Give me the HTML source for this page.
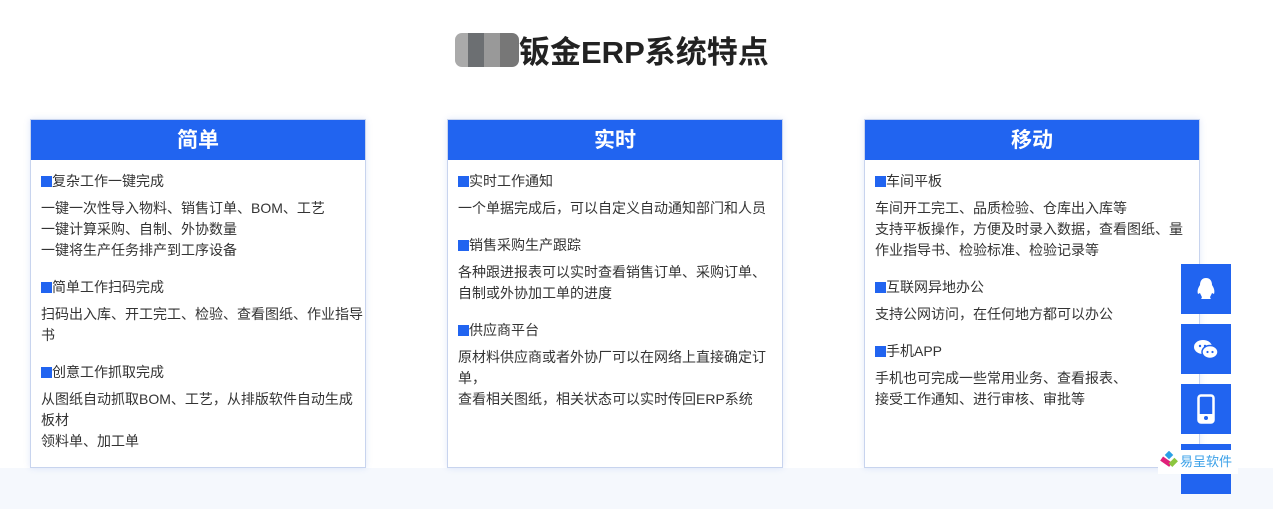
<!DOCTYPE html>
<html><head><meta charset="utf-8"><style>
body{margin:0;width:1273px;height:509px;background:#fff;position:relative;overflow:hidden;font-family:"Liberation Sans","Noto Sans CJK SC",sans-serif;color:#333}
.band{position:absolute;left:0;top:468px;width:1273px;height:41px;background:#f5f8fd}
h1{position:absolute;left:455px;top:30px;margin:0;white-space:nowrap;font-size:31px;font-weight:bold;color:#222;line-height:46px}
.blur{display:inline-block;width:64px;height:34px;vertical-align:-4px;border-radius:7px;background:linear-gradient(90deg,#aaa 0 20%,#6c6f72 20% 45%,#999 45% 70%,#777 70% 100%)}
.card{position:absolute;top:119px;width:334px;height:347px;border:1px solid #c8d4ee;background:#fff;box-shadow:0 0 6px rgba(90,130,220,.18)}
.hd{height:40px;background:#2164f0;color:#fff;font-size:21px;font-weight:bold;text-align:center;line-height:42px}
.bd{padding:11px 0 0 10px;font-size:14px;line-height:21px;color:#333}
.t{margin-bottom:6px}
.t:before{content:"";display:inline-block;width:11px;height:11px;background:#2164f0;vertical-align:-1px}
.p{margin-bottom:16px}
.sb{position:absolute;left:1181px;width:50px;height:50px;background:#2164f0;display:flex;align-items:center;justify-content:center}
.logo{position:absolute;left:1158px;top:450px;width:80px;height:24px;background:#fff;font-size:13px;color:#3aa0e8;line-height:24px}
</style></head><body>
<div class="band"></div>
<h1><span class="blur"></span>钣金ERP系统特点</h1>
<div class="card" style="left:30px"><div class="hd">简单</div><div class="bd">
<div class="t">复杂工作一键完成</div><div class="p">一键一次性导入物料、销售订单、BOM、工艺<br>一键计算采购、自制、外协数量<br>一键将生产任务排产到工序设备</div>
<div class="t">简单工作扫码完成</div><div class="p">扫码出入库、开工完工、检验、查看图纸、作业指导<br>书</div>
<div class="t">创意工作抓取完成</div><div class="p">从图纸自动抓取BOM、工艺，从排版软件自动生成<br>板材<br>领料单、加工单</div></div></div>
<div class="card" style="left:447px"><div class="hd">实时</div><div class="bd">
<div class="t">实时工作通知</div><div class="p">一个单据完成后，可以自定义自动通知部门和人员</div>
<div class="t">销售采购生产跟踪</div><div class="p">各种跟进报表可以实时查看销售订单、采购订单、<br>自制或外协加工单的进度</div>
<div class="t">供应商平台</div><div class="p">原材料供应商或者外协厂可以在网络上直接确定订<br>单，<br>查看相关图纸，相关状态可以实时传回ERP系统</div></div></div>
<div class="card" style="left:864px"><div class="hd">移动</div><div class="bd">
<div class="t">车间平板</div><div class="p">车间开工完工、品质检验、仓库出入库等<br>支持平板操作，方便及时录入数据，查看图纸、量<br>作业指导书、检验标准、检验记录等</div>
<div class="t">互联网异地办公</div><div class="p">支持公网访问，在任何地方都可以办公</div>
<div class="t">手机APP</div><div class="p">手机也可完成一些常用业务、查看报表、<br>接受工作通知、进行审核、审批等</div></div></div>
<div class="sb" style="top:264px"><svg width="22" height="24" viewBox="0 0 22 24"><path d="M11 1C7 1 5 4 5 8C3 11 2 14 3 17L5 16C6 19 8 20 6 22H16C14 20 16 19 17 16L19 17C20 14 19 11 17 8C17 4 15 1 11 1Z" fill="#fff"/></svg></div>
<div class="sb" style="top:324px"><svg width="26" height="22" viewBox="0 0 26 22"><ellipse cx="10" cy="9" rx="9" ry="7" fill="#fff"/><ellipse cx="17" cy="14" rx="8" ry="6.5" fill="#fff" stroke="#2164f0" stroke-width="1.5"/><circle cx="7" cy="8" r="1.2" fill="#2164f0"/><circle cx="12" cy="8" r="1.2" fill="#2164f0"/><circle cx="14.5" cy="14" r="1.1" fill="#2164f0"/><circle cx="19.5" cy="14" r="1.1" fill="#2164f0"/></svg></div>
<div class="sb" style="top:384px"><svg width="18" height="30" viewBox="0 0 18 30"><rect x="1.5" y="1.5" width="15" height="27" rx="2.5" fill="none" stroke="#fff" stroke-width="2.5"/><rect x="1.5" y="20" width="15" height="8" fill="#fff"/><circle cx="9" cy="24" r="2" fill="#2164f0"/></svg></div>
<div class="sb" style="top:444px"></div>
<div class="logo"><svg width="20" height="20" viewBox="0 0 20 20" style="vertical-align:-5px;margin-left:2px"><rect x="6" y="1" width="6" height="6" fill="#2aa0e6" transform="rotate(45 9 4)"/><rect x="1" y="8" width="11" height="5" fill="#e0207a" transform="rotate(35 6 10)"/><rect x="9" y="9" width="8" height="5" fill="#8cc63f" transform="rotate(-45 13 11)"/></svg>易呈软件</div>
</body></html>
